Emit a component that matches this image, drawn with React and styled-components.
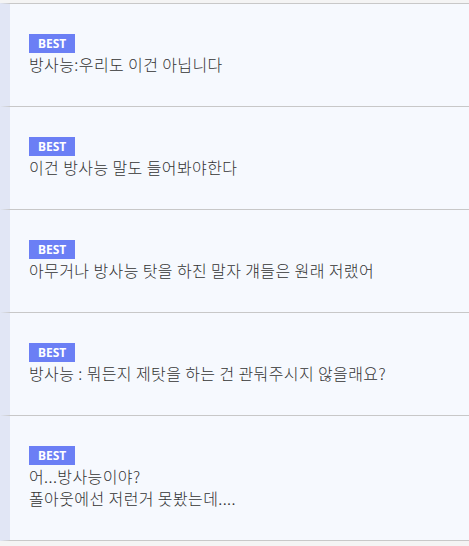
import styled, { createGlobalStyle } from "styled-components";

const GlobalStyle = createGlobalStyle`
  body {
    margin: 0;
    background: #f4f4f4;
    font-family: "Noto Sans CJK KR", "Noto Sans", sans-serif;
  }
`;

const List = styled.ul`
  list-style: none;
  margin: 0;
  padding: 3px 0 0;
`;

const Item = styled.li`
  background: #f6f9fe;
  border-top: 1px solid #c8c8c8;
  border-left: 10px solid #e1e6f5;
  padding: 30px 19px 31px;
  &:last-child {
    border-bottom: 1px solid #c8c8c8;
  }
`;

const Badge = styled.div`
  width: fit-content;
  background: #6b7ff5;
  color: #fff;
  font-family: "Noto Sans", sans-serif;
  font-weight: 700;
  font-size: 12px;
  line-height: 19px;
  height: 19px;
  padding: 0 9px;
`;

const Text = styled.p`
  margin: 0;
  font-size: 16px;
  font-weight: 300;
  letter-spacing: 0.4px;
  line-height: 22px;
  color: #333;
`;

const comments = [
  ["방사능:우리도 이건 아닙니다"],
  ["이건 방사능 말도 들어봐야한다"],
  ["아무거나 방사능 탓을 하진 말자 걔들은 원래 저랬어"],
  ["방사능 : 뭐든지 제탓을 하는 건 관둬주시지 않을래요?"],
  ["어...방사능이야?", "폴아웃에선 저런거 못봤는데...."],
];

export default function App() {
  return (
    <>
      <GlobalStyle />
      <List>
        {comments.map((lines, i) => (
          <Item key={i}>
            <Badge>BEST</Badge>
            {lines.map((l, j) => (
              <Text key={j}>{l}</Text>
            ))}
          </Item>
        ))}
      </List>
    </>
  );
}
